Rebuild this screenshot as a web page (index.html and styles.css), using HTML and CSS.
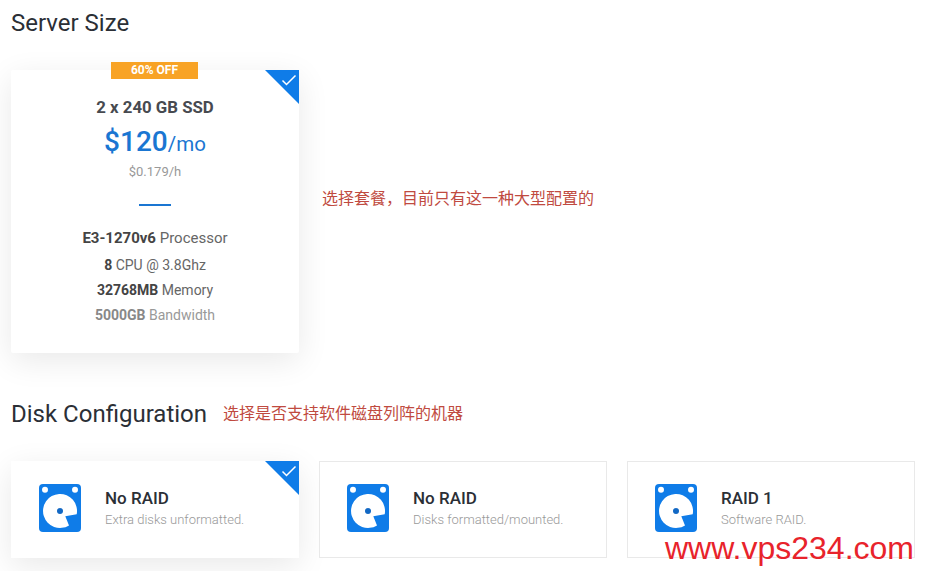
FILE: index.html
```html
<!DOCTYPE html>
<html lang="en">
<head>
<meta charset="utf-8">
<title>Server Size</title>
<link rel="stylesheet" href="styles.css">
</head>
<body>
<svg class="defs" width="0" height="0" aria-hidden="true">
  <symbol id="disk" viewBox="0 0 42 48">
    <rect width="42" height="48" rx="4" fill="#0f7ce8"/>
    <circle cx="6" cy="5.700" r="3" fill="#fff"/>
    <circle cx="36" cy="5.700" r="3" fill="#fff"/>
    <path d="M30 41.400L26.300 32.300L37.700 30.300A17 17 0 1 0 30 41.400z" fill="#fff"/>
    <circle cx="21" cy="27" r="3" fill="#1268c4"/>
  </symbol>
</svg>

<main class="page">
  <h2 class="title first">Server Size</h2>
  <div class="size-row">
    <article class="plan">
      <span class="badge">60% OFF</span>
      <span class="corner"><svg viewBox="0 0 16 12"><path d="M1.500 6.500l4 4L14.500 1.500" fill="none" stroke="#fff" stroke-width="1.500"/></svg></span>
      <h3 class="plan-name">2 x 240 GB SSD</h3>
      <p class="price"><span class="amount">$120</span>/mo</p>
      <p class="hourly">$0.179/h</p>
      <hr class="rule">
      <p class="spec spec-lead"><b>E3-1270v6</b> Processor</p>
      <p class="spec"><b>8</b> CPU @ 3.8Ghz</p>
      <p class="spec"><b>32768MB</b> Memory</p>
      <p class="spec spec-muted"><b>5000GB</b> Bandwidth</p>
    </article>
    <p class="note note-size">选择套餐，目前只有这一种大型配置的</p>
  </div>

  <div class="title-row">
    <h2 class="title">Disk Configuration</h2>
    <p class="note note-disk">选择是否支持软件磁盘列阵的机器</p>
  </div>

  <div class="disks">
    <article class="disk selected">
      <span class="corner"><svg viewBox="0 0 16 12"><path d="M1.500 6.500l4 4L14.500 1.500" fill="none" stroke="#fff" stroke-width="1.500"/></svg></span>
      <svg class="disk-icon"><use href="#disk"/></svg>
      <div><h4 class="disk-name">No RAID</h4><p class="disk-sub">Extra disks unformatted.</p></div>
    </article>
    <article class="disk">
      <svg class="disk-icon"><use href="#disk"/></svg>
      <div><h4 class="disk-name">No RAID</h4><p class="disk-sub">Disks formatted/mounted.</p></div>
    </article>
    <article class="disk">
      <svg class="disk-icon"><use href="#disk"/></svg>
      <div><h4 class="disk-name">RAID 1</h4><p class="disk-sub">Software RAID.</p></div>
    </article>
  </div>
</main>
<div class="watermark">www.vps234.com</div>
</body>
</html>
```

FILE: styles.css
```css
* { box-sizing: border-box; }
html, body { margin: 0; height: 571px; overflow: hidden; background: #fff; }
body { font-family: Roboto, "Noto Sans CJK SC", sans-serif; color: #444; position: relative; }
.defs { position: absolute; }
p, h2, h3, h4 { margin: 0; }
.page { padding: 9px 10px 0 11px; }
.title { font-size: 24px; line-height: 28px; font-weight: 400; color: #2b2f36; }
.size-row { display: flex; align-items: flex-start; gap: 23px; margin-top: 33px; }
.plan {
  position: relative; flex: 0 0 288px; height: 283px; background: #fff; text-align: center;
  box-shadow: 0 8px 32px rgba(0,0,0,.09); padding-top: 27px; border-radius: 2px;
}
.badge {
  position: absolute; top: -8px; left: 100px; width: 87px; height: 17px; background: #f8a325;
  color: #fff; font-size: 12px; font-weight: 700; line-height: 17px;
}
.corner {
  position: absolute; top: 0; right: 0; width: 34px; height: 34px; background: #0f7ce8;
  clip-path: polygon(0 0, 100% 0, 100% 100%);
}
.corner svg { position: absolute; top: 4px; right: 2px; width: 16px; height: 12px; }
.plan-name { font-size: 16.800px; line-height: 20px; font-weight: 700; color: #474a50; }
.price { margin-top: 7px; font-size: 20.500px; line-height: 36px; color: #1a76d2; }
.amount { font-size: 28px; font-weight: 500; }
.hourly { margin-top: 1px; font-size: 13px; line-height: 18px; color: #999; }
.rule { width: 32px; height: 2px; margin: 23px auto 0; border: 0; background: #1a76d2; }
.spec { font-size: 14px; line-height: 25px; color: #666; }
.spec b { color: #444; font-weight: 700; }
.spec-lead { margin-top: 20px; margin-bottom: 2px; font-size: 15px; }
.spec-muted { color: #999; }
.spec-muted b { color: #888; }
.note { font-size: 16px; line-height: 22px; color: #c04a40; font-family: "Noto Sans CJK SC", sans-serif; }
.note-size { margin-top: 116px; }
.note-disk { margin-bottom: 4px; }
.title-row { display: flex; align-items: center; gap: 16px; margin-top: 47px; }
.disks { display: grid; grid-template-columns: repeat(3, 288px); gap: 20px; margin-top: 33px; }
.disk {
  position: relative; height: 97px; display: flex; align-items: center; gap: 24px; padding: 0 0 4px 27px;
  border: 1px solid #e9e9e9; background: #fff;
}
.disk.selected { border-color: #fff; box-shadow: 0 8px 32px rgba(0,0,0,.09); }
.disk.selected .corner { top: -1px; right: -1px; }
.disk-icon { width: 42px; height: 48px; flex: none; }
.disk-name { font-size: 17px; line-height: 20px; font-weight: 500; color: #2b2f36; }
.disk-sub { margin-top: 3px; font-size: 13px; line-height: 17px; font-weight: 300; color: #999; }
.watermark {
  position: absolute; left: 665px; top: 531px; font-family: "Liberation Sans", sans-serif;
  font-size: 32px; line-height: 34px; color: #e8232b; white-space: nowrap;
}
```
